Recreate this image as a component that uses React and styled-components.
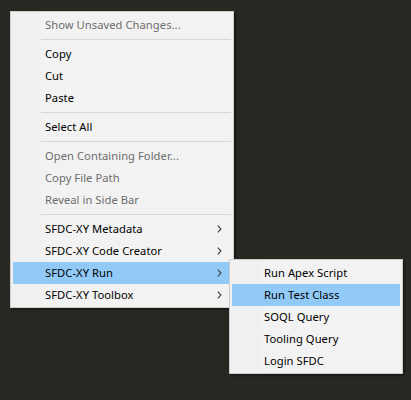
import React from "react";
import styled, { createGlobalStyle } from "styled-components";

const GlobalStyle = createGlobalStyle`
  html, body {
    margin: 0;
    background: #272822;
  }
  body {
    font-family: "Noto Sans", "Open Sans", sans-serif;
  }
`;

const Page = styled.div`
  min-height: 400px;
  padding: 11px 0 0 10px;
  box-sizing: border-box;
`;

const Menu = styled.div`
  position: ${(p) => (p.$sub ? "absolute" : "relative")};
  width: ${(p) => p.$width}px;
  box-sizing: border-box;
  background: linear-gradient(to right, #f0f0f0 30px, #f2f2f2 30px);
  border: 1px solid #cccccc;
  padding: 2px 2px 1px;
  box-shadow: 2px 2px 2px rgba(0, 0, 0, 0.35);
  ${(p) => p.$sub && "left: calc(100% - 2px); top: -3px; z-index: 2;"}
`;

const Item = styled.div`
  position: relative;
  display: flex;
  align-items: center;
  height: 22px;
  box-sizing: border-box;
  padding: 0 9px 1px 32px;
  font-size: 11.2px;
  letter-spacing: 0.05px;
  color: ${(p) => (p.$disabled ? "#6d6d6d" : "#000000")};
  background: ${(p) => (p.$active ? "#91c9f7" : "transparent")};
  white-space: nowrap;
`;

const Label = styled.span`
  flex: 1;
`;

const Separator = styled.div`
  height: 1px;
  background: #d7d7d7;
  margin: 3px 0 3px 28px;
`;

const Chevron = () => (
  <svg width="5" height="8" viewBox="0 0 5 8" style={{ display: "block" }}>
    <path d="M0.8 0.6 L4 4 L0.8 7.4" fill="none" stroke="#404040" strokeWidth="1.1" />
  </svg>
);

const subItems = [
  { label: "Run Apex Script" },
  { label: "Run Test Class", active: true },
  { label: "SOQL Query" },
  { label: "Tooling Query" },
  { label: "Login SFDC" },
];

export default function App() {
  return (
    <Page>
      <GlobalStyle />
      <Menu $width={224}>
        <Item $disabled>
          <Label>Show Unsaved Changes...</Label>
        </Item>
        <Separator />
        <Item><Label>Copy</Label></Item>
        <Item><Label>Cut</Label></Item>
        <Item><Label>Paste</Label></Item>
        <Separator />
        <Item><Label>Select All</Label></Item>
        <Separator />
        <Item $disabled><Label>Open Containing Folder...</Label></Item>
        <Item $disabled><Label>Copy File Path</Label></Item>
        <Item $disabled><Label>Reveal in Side Bar</Label></Item>
        <Separator />
        <Item>
          <Label>SFDC-XY Metadata</Label>
          <Chevron />
        </Item>
        <Item>
          <Label>SFDC-XY Code Creator</Label>
          <Chevron />
        </Item>
        <Item $active>
          <Label>SFDC-XY Run</Label>
          <Chevron />
          <Menu $sub $width={174}>
            {subItems.map((s) => (
              <Item key={s.label} $active={s.active}>
                <Label>{s.label}</Label>
              </Item>
            ))}
          </Menu>
        </Item>
        <Item>
          <Label>SFDC-XY Toolbox</Label>
          <Chevron />
        </Item>
      </Menu>
    </Page>
  );
}
